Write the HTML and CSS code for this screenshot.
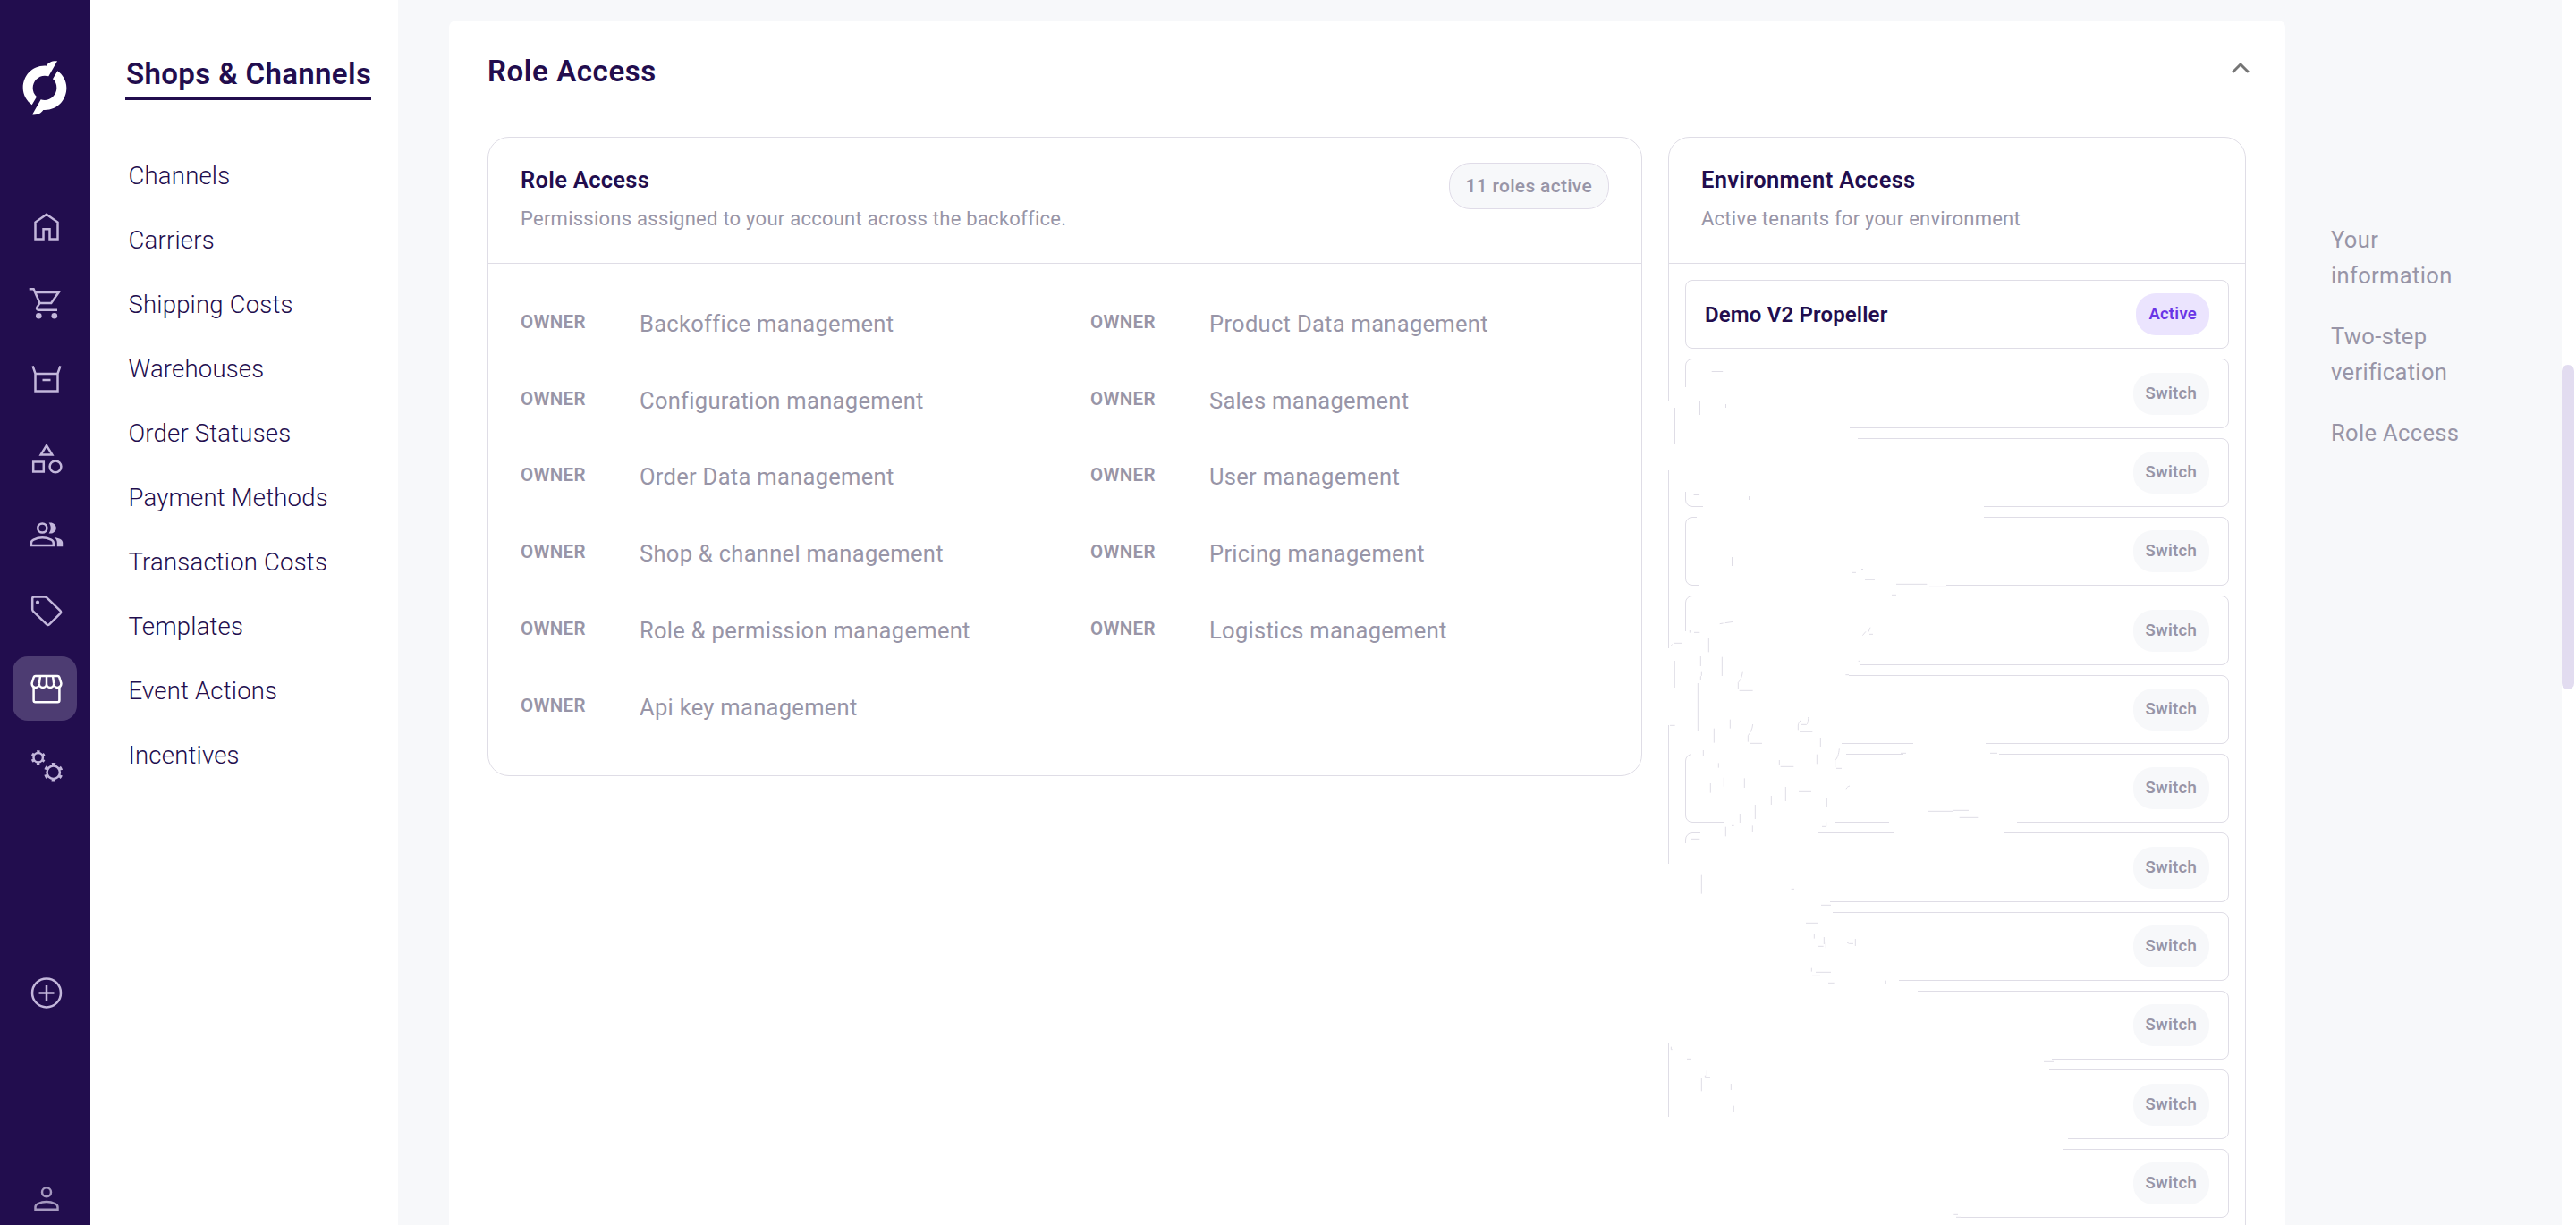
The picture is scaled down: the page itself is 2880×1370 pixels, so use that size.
FILE: index.html
```html
<!DOCTYPE html>
<html lang="en">
<head>
    <meta charset="UTF-8">
    <meta name="viewport" content="width=device-width, initial-scale=1.0">
    <title>Role Access</title>
    <link rel="stylesheet" href="styles.css">
</head>
<body>

<div class="app">

    <!-- Icon rail -->
    <nav class="rail">
        <svg class="logo" viewBox="75 200 150 188">
            <path id="blade" d="M192 204C172 203 163 209 155 220C110 217 77 252 77 294C77 318 90 339 107 351L123 324C114 316 110 306 110 294C110 272 128 253 150 253C155 253 159 254 163 255Z"/>
            <use href="#blade" transform="rotate(180 150 294)"/>
        </svg>

        <a class="rail-item">
            <svg viewBox="0 0 40 40"><path d="M7.5 33.5V14.6L20 5.7l12.5 8.9v18.9h-9V22.2h-7v11.3z"/></svg>
        </a>
        <a class="rail-item">
            <svg viewBox="0 0 40 40">
                <path d="M.7 3.2h4.9l6.9 15.7h12.7l8.4-12H7.2M12.5 18.9l-3.2 5c-.7 1.4.2 2.8 1.8 2.8H32"/>
                <circle class="solid" cx="11.3" cy="33.3" r="3.3"/>
                <circle class="solid" cx="28.8" cy="33.3" r="3.3"/>
            </svg>
        </a>
        <a class="rail-item">
            <svg viewBox="0 0 40 40"><path d="M4.6 3.4l2.9 8.4v19.7h25V11.8l2.9-8.4M7.5 12h25M15.5 18.9h9"/></svg>
        </a>
        <a class="rail-item">
            <svg viewBox="0 0 40 40">
                <path d="M20 6.2l6.3 10.2H13.7zM5.2 24.6h11.6v11H5.2z"/>
                <circle cx="30" cy="29.8" r="6.4"/>
            </svg>
        </a>
        <a class="rail-item">
            <svg viewBox="0 0 40 40">
                <circle cx="15.3" cy="12.5" r="5.1"/>
                <path d="M2.9 32v-2.6c0-1.7.9-3 2.6-3.8 6.3-2.9 13.4-2.9 19.7 0 1.7.8 2.6 2.1 2.6 3.8V32z"/>
                <path class="solid" d="M22.6 18.4c1.3-1.6 2.1-3.6 2.1-5.9s-.8-4.3-2.1-5.9c4.2-1 8.2 1.9 8.2 5.9s-4 6.9-8.2 5.9zM31.8 33.2v-4.4c0-2.2-1-4.3-3.2-5.9 4.6.5 9.6 2.3 9.6 5.9v4.4z"/>
            </svg>
        </a>
        <a class="rail-item">
            <svg viewBox="0 0 40 40">
                <path d="M6.2 3.4h11.9c.8 0 1.6.3 2.2.9l14.9 14.6c1 1 1 2.3.1 3.3L23.3 34.2c-1 1-2.3 1-3.3 0L5.1 19.6c-.6-.6-.9-1.3-.9-2.1V5.4c0-1.1.9-2 2-2z"/>
                <circle class="solid" cx="10" cy="9.7" r="2.1"/>
            </svg>
        </a>
        <a class="rail-item active">
            <svg viewBox="0 0 40 40">
                <path d="M5.6 18.5v14.8a2 2 0 0 0 2 2h24.8a2 2 0 0 0 2-2V18.5"/>
                <path d="M7.7 5.9h24.6c.9 0 1.7.6 2 1.5l2 6.3c.5 2.9-1.4 5.2-4 5.2-2.3 0-4.1-1.9-4.1-4.2 0 2.3-1.8 4.2-4.1 4.2S20 17 20 14.7c0 2.3-1.8 4.2-4.1 4.2s-4.1-1.9-4.1-4.2c0 2.3-1.8 4.2-4.1 4.2-2.6 0-4.5-2.3-4-5.2l2-6.3c.3-.9 1.1-1.5 2-1.5zM13 5.9l-1.2 8.8M20 5.9v8.8M27 5.9l1.2 8.8"/>
            </svg>
        </a>
        <a class="rail-item">
            <svg viewBox="0 0 40 40">
                <circle cx="10.7" cy="11.3" r="5.2"/>
                <circle class="teeth-small" cx="10.7" cy="11.3" r="6.9" transform="rotate(30 10.7 11.3)"/>
                <circle cx="27.7" cy="27.7" r="7.2"/>
                <circle class="teeth-large" cx="27.7" cy="27.7" r="9.3" transform="rotate(30 27.7 27.7)"/>
            </svg>
        </a>
        <a class="rail-item add">
            <svg viewBox="0 0 40 40">
                <circle cx="20" cy="20.4" r="16"/>
                <path d="M20 11.9v17M11.5 20.4h17"/>
            </svg>
        </a>
        <a class="rail-item profile">
            <svg viewBox="0 0 40 40">
                <circle cx="20" cy="13.3" r="5"/>
                <path d="M7.5 32.7v-2.6c0-1.7.9-3 2.6-3.8 6.2-2.9 13.6-2.9 19.8 0 1.7.8 2.6 2.1 2.6 3.8v2.6z"/>
            </svg>
        </a>
    </nav>

    <!-- Section menu -->
    <aside class="menu">
        <h2 class="menu-title">Shops &amp; Channels</h2>
        <ul class="menu-list">
            <li>Channels</li>
            <li>Carriers</li>
            <li>Shipping Costs</li>
            <li>Warehouses</li>
            <li>Order Statuses</li>
            <li>Payment Methods</li>
            <li>Transaction Costs</li>
            <li>Templates</li>
            <li>Event Actions</li>
            <li>Incentives</li>
        </ul>
    </aside>

    <!-- Content -->
    <main class="content">
        <section class="panel">
            <header class="panel-header">
                <h1>Role Access</h1>
                <svg class="chevron" viewBox="0 0 20 12"><path d="M1.2 10.7L10 1.9l8.8 8.8"/></svg>
            </header>

            <div class="cards">
                <div class="card">
                    <div class="card-header">
                        <div>
                            <h3>Role Access</h3>
                            <p>Permissions assigned to your account across the backoffice.</p>
                        </div>
                        <span class="count">11 roles active</span>
                    </div>
                    <div class="roles">
                        <div class="role"><span class="level">OWNER</span><span>Backoffice management</span></div>
                        <div class="role"><span class="level">OWNER</span><span>Product Data management</span></div>
                        <div class="role"><span class="level">OWNER</span><span>Configuration management</span></div>
                        <div class="role"><span class="level">OWNER</span><span>Sales management</span></div>
                        <div class="role"><span class="level">OWNER</span><span>Order Data management</span></div>
                        <div class="role"><span class="level">OWNER</span><span>User management</span></div>
                        <div class="role"><span class="level">OWNER</span><span>Shop &amp; channel management</span></div>
                        <div class="role"><span class="level">OWNER</span><span>Pricing management</span></div>
                        <div class="role"><span class="level">OWNER</span><span>Role &amp; permission management</span></div>
                        <div class="role"><span class="level">OWNER</span><span>Logistics management</span></div>
                        <div class="role"><span class="level">OWNER</span><span>Api key management</span></div>
                    </div>
                </div>

                <div class="card environments">
                    <div class="card-header">
                        <div>
                            <h3>Environment Access</h3>
                            <p>Active tenants for your environment</p>
                        </div>
                    </div>
                    <div class="tenants">
                        <div class="tenant"><span>Demo V2 Propeller</span><span class="tag tag-active">Active</span></div>
                        <div class="tenant"><span class="tag">Switch</span></div>
                        <div class="tenant"><span class="tag">Switch</span></div>
                        <div class="tenant"><span class="tag">Switch</span></div>
                        <div class="tenant"><span class="tag">Switch</span></div>
                        <div class="tenant"><span class="tag">Switch</span></div>
                        <div class="tenant"><span class="tag">Switch</span></div>
                        <div class="tenant"><span class="tag">Switch</span></div>
                        <div class="tenant"><span class="tag">Switch</span></div>
                        <div class="tenant"><span class="tag">Switch</span></div>
                        <div class="tenant"><span class="tag">Switch</span></div>
                        <div class="tenant"><span class="tag">Switch</span></div>
                    </div>

                    <!-- Redacted tenant names: white patches, then leftover strokes -->
                    <svg class="redaction" viewBox="0 0 520 1230">
                        <path class="patch" d="M9 308h4v78h-4zM9 585h4v86h-4zM9 826h4v200h-4zM9 1109h4v121h-4z
                            M27 293H213V341H27zM27 341H222V410H27zM49 420H363V432H49zM42 432H363V446H42z
                            M45 508H321V520H45zM51 520H269V534H51zM27 566H40V598H27zM27 598H224V608H27z
                            M27 608H212V624H27zM27 624H40V684H27zM27 684H204V697H27zM284 684H365V697H284z
                            M35 697H209V712H35zM273 697H380V712H273zM73 775H197V786H73zM257 775H400V786H257z
                            M46 786H177V799H46zM262 786H385V799H262zM27 803H40V860H27zM27 860H191V873H27z
                            M27 873H194V890H27zM27 890H40V950H27zM27 950H268V962H27zM27 962H289V980H27z
                            M27 980H40V1036H27zM27 1036H439V1050H27zM27 1050H436V1064H27zM27 1064H40V1126H27z
                            M27 1126H457V1139H27zM27 1139H451V1152H27zM27 1152H40V1214H27zM27 1214H337V1230H27z"/>
                        <path d="M58.7 275.5h12.5M45.5 309v15M74.5 312v4M17.5 316v40M38.6 413.5h6.5M100.5 415v4M120.5 426v15M81.5 483v10M226 496.5h2"/>
                        <g class="scraps" transform="translate(0 500) scale(.33333)">
                            <path d="M645 1h15M690 25h33M795 40h103M906 49h57M780 76h15M203 173l12-2M221 170l28-4M103 195v8M117 202h19
                                M50 238h25M40 245l4-3M166 220v48M139 282v33M142 332v15l-3 3v12M130 372v160M211 284v64M52 297v90
                                M280 332c-2 20-8 30-15 38v22M269 397h45M682 212l11-13M702 200l6-15M705 208h12M668 298h7M625 344h11
                                M238 494v30M184 524v48M314 510c-2 18-8 28-16 38v21M303 574h42M36 514h17M500 486c0 12-2 24-6 25h-18
                                M474 497c-3 6-8 10-8 16v16M471 535h43M541 555v30M529 611v32M604 592c-2 20-6 30-14 40v22M594 658h18
                                M403 630v18M407 652h44M148 597v20M199 640v16M217 689v30M172 708v32M286 691v32M376 750v30M424 720v48
                                M468 736h42M627 727c2-6 8-9 12-10M562 756v30M322 780v48M271 810v30M223 854v32M243 850h8M313 850v20
                                M560 838v15h-14M900 802h86M986 799h52M1007 823h62M810 607h18M1110 607h24M108 895h28M142 1016v63
                                M443 1063h10M543 1117h33M492 1177h39M520 1214v15M553 1224v24M559 1241v20M531 1255h20M630 1242l7 4h14
                                M658 1230v24M511 1328v12M525 1342h51M513 1354h27M567 1378h20M760 1370v12"/>
                        </g>
                        <g class="scraps" transform="translate(0 970) scale(.33333)">
                            <path d="M40 182v9h4M93 223h15M160 262v20M154 278v8h17M142 288v43M241 306v21M250 380v22M1290 232h33M988 745h14M996 754h15"/>
                        </g>
                    </svg>
                </div>
            </div>
        </section>

        <!-- On this page -->
        <ul class="toc">
            <li>Your information</li>
            <li>Two-step verification</li>
            <li>Role Access</li>
        </ul>
    </main>

    <div class="scrollbar"><div class="thumb"></div></div>
</div>

</body>
</html>
```
FILE: styles.css
```css
* {
    box-sizing: border-box;
}

body, html {
    margin: 0;
    padding: 0;
    height: 100%;
}

body {
    font-family: Roboto, "Open Sans", sans-serif;
    color: #220d4e;
    background-color: #f7f8fa;
    overflow: hidden;
}

h1, h2, h3, p, ul {
    margin: 0;
    padding: 0;
}

ul {
    list-style: none;
}

.app {
    display: flex;
    height: 100vh;
    overflow: hidden;
}

/* Icon rail */
.rail {
    flex: none;
    width: 101px;
    padding: 67px 0 0 14px;
    background-color: #220d4e;
}

.logo {
    display: block;
    width: 50px;
    height: 62.7px;
    margin: 0 0 88px 11px;
    fill: #fff;
}

.rail-item {
    display: flex;
    align-items: center;
    justify-content: center;
    width: 72px;
    height: 72px;
    margin-bottom: 14.1px;
    padding-left: 4px;
    border-radius: 17px;
    color: #c3b7db;
}

.rail-item svg {
    width: 40px;
    height: 40px;
    overflow: visible;
    fill: none;
    stroke: currentColor;
    stroke-width: 2.5;
}

.rail-item .solid {
    fill: currentColor;
    stroke: none;
}

.rail-item .teeth-small {
    stroke-width: 2.4;
    stroke-dasharray: 3.2 4.026;
    stroke-dashoffset: 1.6;
}

.rail-item .teeth-large {
    stroke-width: 3;
    stroke-dasharray: 4 5.739;
    stroke-dashoffset: 2;
}

.rail-item.active {
    color: #fff;
    background-color: #4d3c72;
}

.rail-item.add {
    margin-top: 182px;
}

.rail-item.profile {
    margin-top: 158px;
    color: #a598bf;
}

/* Section menu */
.menu {
    flex: none;
    width: 344px;
    padding: 64px 0 0 39px;
    background-color: #fff;
}

.menu-title {
    display: inline-block;
    padding: 0 0 6px 1px;
    border-bottom: 4px solid #220d4e;
    font-size: 33px;
    font-weight: 560;
    line-height: 38px;
    letter-spacing: 0.36px;
}

.menu-list {
    margin: 49px 0 0 3.5px;
    font-size: 27.5px;
    font-weight: 330;
    line-height: 72px;
    letter-spacing: 0.2px;
}

/* Content */
.content {
    flex: 1;
    display: flex;
    align-items: flex-start;
    padding: 23px 0 0 57px;
}

.panel {
    flex: none;
    width: 2053px;
    height: 1600px;
    padding: 37px 44px 0 43px;
    border-radius: 8px;
    background-color: #fff;
}

.panel-header {
    display: flex;
    justify-content: space-between;
    height: 93px;
}

h1 {
    font-size: 33px;
    font-weight: 560;
    line-height: 40px;
    letter-spacing: 0.6px;
}

.chevron {
    width: 20px;
    height: 12px;
    margin: 10px -4px 0 0;
    fill: none;
    stroke: #757575;
    stroke-width: 2.8;
}

.cards {
    display: flex;
    align-items: flex-start;
    gap: 29px;
}

.card {
    position: relative;
    width: 1291px;
    border: 1px solid #dfdde6;
    border-radius: 24px;
}

.environments {
    width: 646px;
    height: 1400px;
}

.card-header {
    display: flex;
    align-items: flex-start;
    justify-content: space-between;
    height: 141px;
    padding: 28px 36px 0;
    border-bottom: 1px solid #dfdde6;
}

.card-header h3 {
    margin-top: 4px;
    font-size: 25.5px;
    font-weight: 580;
    line-height: 30px;
    letter-spacing: 0.3px;
}

.card-header p {
    margin-top: 15px;
    font-size: 22px;
    line-height: 28px;
    letter-spacing: 0.25px;
    color: #9895a7;
}

.count {
    padding: 0 18px;
    border: 1px solid #e0dce8;
    border-radius: 24px;
    background-color: #f7f8fa;
    font-size: 21px;
    font-weight: 540;
    line-height: 50px;
    letter-spacing: 0.3px;
    color: #9895a7;
}

.roles {
    display: grid;
    grid-template-columns: 637px 1fr;
    grid-auto-rows: 85.8px;
    padding: 24px 0 33px 36px;
}

.role {
    display: flex;
    align-items: center;
    font-size: 25.5px;
    font-weight: 420;
    letter-spacing: 0.3px;
    color: #9895a7;
}

.level {
    width: 133px;
    padding-bottom: 4px;
    font-size: 20.5px;
    font-weight: 600;
}

.tenants {
    display: flex;
    flex-direction: column;
    gap: 10.96px;
    padding: 18px;
}

.tenant {
    flex: none;
    display: flex;
    align-items: center;
    justify-content: space-between;
    height: 77.4px;
    padding: 0 21px;
    border: 1px solid #dfdde6;
    border-radius: 8px;
    font-size: 24px;
    font-weight: 560;
    letter-spacing: 0.15px;
}

.tag {
    margin-left: auto;
    padding: 0 14px;
    border-radius: 22px;
    background-color: #f7f8fa;
    font-size: 18.5px;
    line-height: 47px;
    letter-spacing: 0.25px;
    color: #9895a7;
}

.tag-active {
    background-color: #ebe4fe;
    color: #6936e6;
}

.redaction {
    position: absolute;
    left: -11px;
    top: -14px;
    width: 520px;
    height: 1230px;
    fill: none;
    stroke: #dfdde6;
    stroke-width: 1;
}

.redaction .patch {
    fill: #fff;
    stroke: none;
}

.redaction .scraps {
    stroke-width: 3;
}

/* On this page */
.toc {
    width: 170px;
    margin: 224.5px 0 0 51px;
    font-size: 25.5px;
    font-weight: 420;
    line-height: 40px;
    letter-spacing: 0.35px;
    color: #9895a7;
}

.toc li {
    margin-bottom: 28px;
}

/* Scrollbar */
.scrollbar {
    flex: none;
    width: 16px;
    padding-top: 408px;
    background-color: #fff;
}

.thumb {
    width: 14px;
    height: 363px;
    border-radius: 7px;
    background-color: #e2dcf0;
}
```
